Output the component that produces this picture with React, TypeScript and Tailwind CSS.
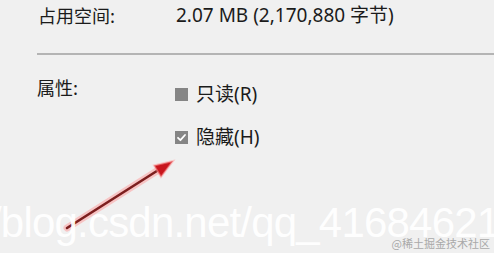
import React from "react"

const cjk = "font-['Noto_Sans_CJK_SC','Noto_Sans',sans-serif]"
const latin = "font-['Noto_Sans','Noto_Sans_CJK_SC',sans-serif]"

function Box({ checked }: { checked?: boolean }) {
  return (
    <span className="flex h-[13px] w-[13px] items-center justify-center bg-[#858585]">
      {checked && (
        <svg width="11" height="11" viewBox="0 0 11 11" fill="none">
          <path d="M2 5.8 L4.4 8.2 L9 3" stroke="#fff" strokeWidth="1.8" strokeLinecap="round" strokeLinejoin="round" />
        </svg>
      )}
    </span>
  )
}

export default function App() {
  return (
    <div className="relative h-[253px] w-[494px] overflow-hidden bg-[#f0f0f0] text-[#1b1b1b]">
      {/* size row */}
      <div className="flex h-6 items-center pl-[38px] pt-[5px] leading-6">
        <span className={`w-[138px] text-[18px] ${cjk}`}>占用空间:</span>
        <span className={`text-[19px] ${latin}`}>
          2.07 MB (2,170,880 <span className={cjk}>字节</span>)
        </span>
      </div>

      <div className="ml-[37px] mt-[29px] h-[2px] bg-[#b4b4b4]" />

      {/* attributes */}
      <div className="mt-[20px] flex pl-[37px]">
        <span className={`w-[138px] text-[18px] leading-6 ${cjk}`}>属性:</span>
        <div className="mt-[7px] flex flex-col gap-[19px]">
          <label className="flex h-6 items-center gap-[8px] text-[19px]">
            <Box />
            <span className={cjk}>只读<span className={latin}>(R)</span></span>
          </label>
          <label className="flex h-6 items-center gap-[8px] text-[19px]">
            <Box checked />
            <span className={cjk}>隐藏<span className={latin}>(H)</span></span>
          </label>
        </div>
      </div>

      {/* annotation arrow */}
      <svg className="absolute left-0 top-0" width="494" height="253" viewBox="0 0 494 253">
        <line x1="67" y1="228" x2="160" y2="169" stroke="#ff8f8f" strokeOpacity="0.45" strokeWidth="7" strokeLinecap="round" />
        <line x1="67" y1="228" x2="160" y2="169" stroke="#7d1f1f" strokeWidth="2.6" strokeLinecap="round" />
        <polygon points="173,161 154,165.5 161,177" fill="#c8161d" stroke="#ff9a9a" strokeOpacity="0.5" strokeWidth="2" />
      </svg>

      {/* watermarks */}
      <div className="absolute left-[-10px] top-[202px] whitespace-nowrap font-['Liberation_Sans',Arial,sans-serif] text-[42px] leading-[42px] tracking-[-0.8px] text-white/95">
        /blog.csdn.net/qq_41684621/
      </div>
      <div className={`absolute bottom-[2px] right-[4px] text-[11px] leading-4 text-[#a9a9a9] ${cjk}`}>
        @稀土掘金技术社区
      </div>
    </div>
  )
}
